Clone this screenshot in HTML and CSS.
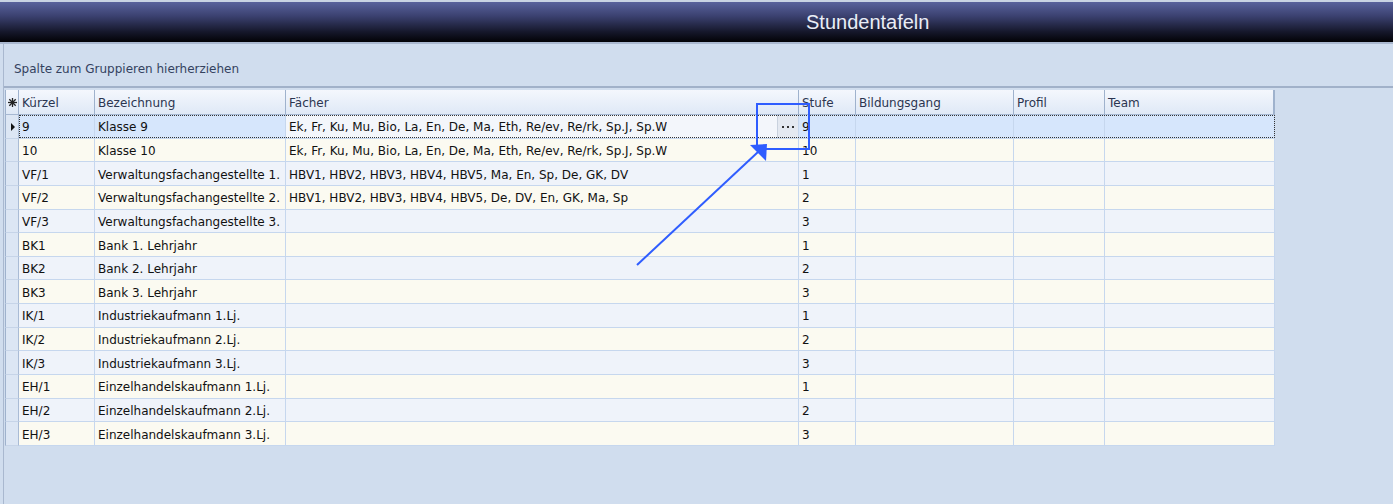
FILE: index.html
```html
<!DOCTYPE html>
<html lang="de">
<head>
<meta charset="utf-8">
<title>Stundentafeln</title>
<link rel="stylesheet" href="styles.css">
</head>
<body>
<div class="titlebar"><span class="title">Stundentafeln</span></div>
<div class="main">
  <div class="grouppanel">Spalte zum Gruppieren hierherziehen</div>
  <div class="grid">
    <div class="row head">
      <div class="ind"><svg width="9" height="9" viewBox="0 0 9 9"><g stroke="#222" stroke-width="1.3"><line x1="4.5" y1="0" x2="4.5" y2="9"/><line x1="0" y1="4.5" x2="9" y2="4.5"/><line x1="1.3" y1="1.3" x2="7.7" y2="7.7"/><line x1="7.7" y1="1.3" x2="1.3" y2="7.7"/></g></svg></div>
      <div class="c">Kürzel</div><div class="c">Bezeichnung</div><div class="c">Fächer</div><div class="c">Stufe</div><div class="c">Bildungsgang</div><div class="c">Profil</div><div class="c">Team</div>
    </div>
    <div class="row sel">
      <div class="ind"><span class="tri"></span></div>
      <div class="c">9</div><div class="c">Klasse 9</div>
      <div class="c edit"><span class="etext">Ek, Fr, Ku, Mu, Bio, La, En, De, Ma, Eth, Re/ev, Re/rk, Sp.J, Sp.W</span><span class="ebtn"><svg width="12" height="3" viewBox="0 0 12 3"><rect x="0" y="0" width="2" height="2" fill="#333"/><rect x="5" y="0" width="2" height="2" fill="#333"/><rect x="10" y="0" width="2" height="2" fill="#333"/></svg></span></div>
      <div class="c">9</div><div class="c"></div><div class="c"></div><div class="c"></div>
    </div>
    <div class="row odd"><div class="ind"></div><div class="c">10</div><div class="c">Klasse 10</div><div class="c">Ek, Fr, Ku, Mu, Bio, La, En, De, Ma, Eth, Re/ev, Re/rk, Sp.J, Sp.W</div><div class="c">10</div><div class="c"></div><div class="c"></div><div class="c"></div></div>
    <div class="row"><div class="ind"></div><div class="c">VF/1</div><div class="c">Verwaltungsfachangestellte 1.</div><div class="c">HBV1, HBV2, HBV3, HBV4, HBV5, Ma, En, Sp, De, GK, DV</div><div class="c">1</div><div class="c"></div><div class="c"></div><div class="c"></div></div>
    <div class="row odd"><div class="ind"></div><div class="c">VF/2</div><div class="c">Verwaltungsfachangestellte 2.</div><div class="c">HBV1, HBV2, HBV3, HBV4, HBV5, De, DV, En, GK, Ma, Sp</div><div class="c">2</div><div class="c"></div><div class="c"></div><div class="c"></div></div>
    <div class="row"><div class="ind"></div><div class="c">VF/3</div><div class="c">Verwaltungsfachangestellte 3.</div><div class="c"></div><div class="c">3</div><div class="c"></div><div class="c"></div><div class="c"></div></div>
    <div class="row odd"><div class="ind"></div><div class="c">BK1</div><div class="c">Bank 1. Lehrjahr</div><div class="c"></div><div class="c">1</div><div class="c"></div><div class="c"></div><div class="c"></div></div>
    <div class="row"><div class="ind"></div><div class="c">BK2</div><div class="c">Bank 2. Lehrjahr</div><div class="c"></div><div class="c">2</div><div class="c"></div><div class="c"></div><div class="c"></div></div>
    <div class="row odd"><div class="ind"></div><div class="c">BK3</div><div class="c">Bank 3. Lehrjahr</div><div class="c"></div><div class="c">3</div><div class="c"></div><div class="c"></div><div class="c"></div></div>
    <div class="row"><div class="ind"></div><div class="c">IK/1</div><div class="c">Industriekaufmann 1.Lj.</div><div class="c"></div><div class="c">1</div><div class="c"></div><div class="c"></div><div class="c"></div></div>
    <div class="row odd"><div class="ind"></div><div class="c">IK/2</div><div class="c">Industriekaufmann 2.Lj.</div><div class="c"></div><div class="c">2</div><div class="c"></div><div class="c"></div><div class="c"></div></div>
    <div class="row"><div class="ind"></div><div class="c">IK/3</div><div class="c">Industriekaufmann 3.Lj.</div><div class="c"></div><div class="c">3</div><div class="c"></div><div class="c"></div><div class="c"></div></div>
    <div class="row odd"><div class="ind"></div><div class="c">EH/1</div><div class="c">Einzelhandelskaufmann 1.Lj.</div><div class="c"></div><div class="c">1</div><div class="c"></div><div class="c"></div><div class="c"></div></div>
    <div class="row"><div class="ind"></div><div class="c">EH/2</div><div class="c">Einzelhandelskaufmann 2.Lj.</div><div class="c"></div><div class="c">2</div><div class="c"></div><div class="c"></div><div class="c"></div></div>
    <div class="row odd"><div class="ind"></div><div class="c">EH/3</div><div class="c">Einzelhandelskaufmann 3.Lj.</div><div class="c"></div><div class="c">3</div><div class="c"></div><div class="c"></div><div class="c"></div></div>
  </div>
</div>
<svg class="annot" width="1393" height="504" viewBox="0 0 1393 504">
  <g fill="none" stroke="#2f5dff" stroke-width="2">
    <polyline points="757,150 757,104 809,104 809,149 764,149"/>
    <line x1="637" y1="265" x2="758" y2="152"/>
  </g>
  <polygon points="767,144 750,145 766,161" fill="#2f5dff"/>
</svg>
</body>
</html>
```

FILE: styles.css
```css
html, body {
  margin: 0;
  padding: 0;
}
body {
  width: 1393px;
  height: 504px;
  overflow: hidden;
  background: #d0ddee;
  font-family: "DejaVu Sans", Verdana, sans-serif;
  font-size: 12px;
  position: relative;
}
.titlebar {
  height: 40px;
  border-top: 2px solid #c9d3e3;
  border-bottom: 2px solid #aab8cf;
  background: linear-gradient(to bottom, #59629c 0%, #3b4170 35%, #15172a 75%, #020206 100%);
  display: flex;
  align-items: center;
  padding-left: 806px;
  box-sizing: content-box;
}
.title {
  font-family: "Liberation Sans", Arial, sans-serif;
  color: #e9edf6;
  font-size: 20px;
  line-height: 20px;
  margin-top: -1px;
}
.main {
  margin-left: 3px;
  border-left: 1px solid #a9b8cf;
  height: 460px;
}
.grouppanel {
  height: 44px;
  border-bottom: 2px solid #a1b1c9;
  box-sizing: border-box;
  padding-left: 10px;
  padding-top: 18px;
  line-height: 14px;
  color: #34425f;
}
.grid {
  margin-left: 1px;
  margin-top: 2px;
  width: 1270px;
}
.row {
  display: grid;
  grid-template-columns: 14px 76px 191px 513px 57px 158px 91px 170px;
  height: 23.65px;
  box-sizing: border-box;
  background: #eff3fa;
  position: relative;
}
.row.odd {
  background: #fbfaf1;
}
.row .c {
  border-right: 1px solid #c6d7ee;
  border-bottom: 1px solid #c6d7ee;
  padding-left: 3px;
  display: flex;
  align-items: center;
  white-space: nowrap;
  overflow: hidden;
  color: #111;
  box-sizing: border-box;
  padding-top: 2px;
}
.row .ind {
  border-left: 1px solid #9fb2cd;
  border-right: 1px solid #a9bbd5;
  border-bottom: 1px solid #c6d4e8;
  background: #dce6f4;
  box-sizing: border-box;
  display: flex;
  align-items: center;
  justify-content: center;
}
.row.head {
  height: 25px;
  background: linear-gradient(to bottom, #f4f7fd, #dee8f6);
}
.row.head .c {
  color: #2b3550;
  border-right: 1px solid #9fb2cd;
  border-bottom: 1px solid #a6b8d2;
  padding-top: 2px;
}
.row.head .ind {
  background: linear-gradient(to bottom, #f4f7fd, #dee8f6);
  border-bottom: 1px solid #a6b8d2;
  border-right: 1px solid #9fb2cd;
}
.row.head .c:last-child {
  border-right: 2px solid #9fb2cd;
}
.row.sel {
  background: #d6e6fc;
}
.row.sel::after {
  content: "";
  position: absolute;
  left: 14px;
  right: 0;
  top: 0;
  bottom: 1px;
  border: 1px dotted #333;
  pointer-events: none;
}
.tri {
  width: 0;
  height: 0;
  border-top: 4px solid transparent;
  border-bottom: 4px solid transparent;
  border-left: 4px solid #111;
  margin-left: 1px;
  margin-top: 1px;
}
.c.edit {
  background: #f3f6fb;
  padding-right: 0;
  padding-top: 0;
  justify-content: space-between;
}
.etext {
  overflow: hidden;
  padding-top: 2px;
}
.ebtn {
  width: 21px;
  height: 100%;
  border-left: 1px solid #c9d2de;
  background: #e4e9f1;
  display: flex;
  align-items: center;
  justify-content: center;
  padding-top: 2px;
  box-sizing: border-box;
}
.annot {
  position: absolute;
  left: 0;
  top: 0;
  pointer-events: none;
}
```
